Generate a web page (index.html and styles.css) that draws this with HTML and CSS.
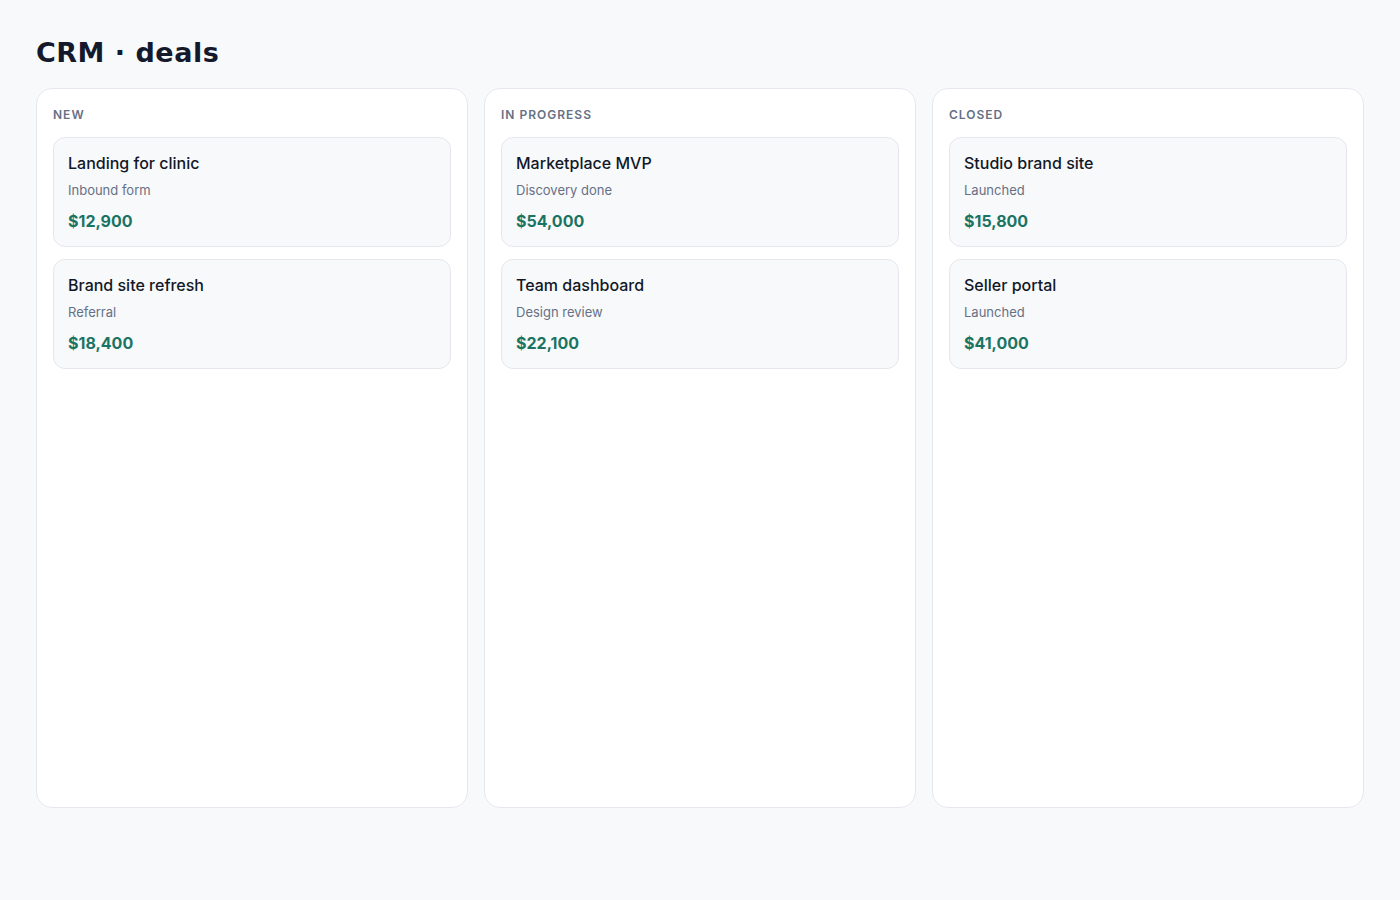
FILE: index.html
```html
<!DOCTYPE html>
<html lang="en">
<head>
    <meta charset="UTF-8">
    <meta name="viewport" content="width=device-width, initial-scale=1.0">
    <title>CRM - Deals</title>
    <link rel="stylesheet" href="styles.css">
</head>
<body>

    <div class="page">
        <h1 class="page-title">CRM · deals</h1>

        <div class="board">
            <div class="column">
                <div class="column-label">NEW</div>
                <div class="deal">
                    <div class="deal-name">Landing for clinic</div>
                    <div class="deal-note">Inbound form</div>
                    <div class="deal-amount">$12,900</div>
                </div>
                <div class="deal">
                    <div class="deal-name">Brand site refresh</div>
                    <div class="deal-note">Referral</div>
                    <div class="deal-amount">$18,400</div>
                </div>
            </div>

            <div class="column">
                <div class="column-label">IN PROGRESS</div>
                <div class="deal">
                    <div class="deal-name">Marketplace MVP</div>
                    <div class="deal-note">Discovery done</div>
                    <div class="deal-amount">$54,000</div>
                </div>
                <div class="deal">
                    <div class="deal-name">Team dashboard</div>
                    <div class="deal-note">Design review</div>
                    <div class="deal-amount">$22,100</div>
                </div>
            </div>

            <div class="column">
                <div class="column-label">CLOSED</div>
                <div class="deal">
                    <div class="deal-name">Studio brand site</div>
                    <div class="deal-note">Launched</div>
                    <div class="deal-amount">$15,800</div>
                </div>
                <div class="deal">
                    <div class="deal-name">Seller portal</div>
                    <div class="deal-note">Launched</div>
                    <div class="deal-amount">$41,000</div>
                </div>
            </div>
        </div>
    </div>

</body>
</html>
```

FILE: styles.css
```css
body {
    font-family: 'Inter', 'Noto Sans', sans-serif;
    margin: 0;
    padding: 0;
    background-color: #f8f9fb;
    color: #111827;
}

.page {
    padding: 37px 36px 0 36px;
}

.page-title {
    font-family: 'DejaVu Sans', sans-serif;
    font-size: 27px;
    font-weight: bold;
    letter-spacing: 0.5px;
    color: #141a2b;
    margin: 0 0 19px 0;
    line-height: 32px;
}

.board {
    display: grid;
    grid-template-columns: repeat(3, 1fr);
    gap: 16px;
}

.column {
    background-color: #fff;
    border: 1px solid #e6e8ee;
    border-radius: 16px;
    height: 720px;
    box-sizing: border-box;
    padding: 18px 16px 16px 16px;
    display: flex;
    flex-direction: column;
    gap: 12px;
}

.column-label {
    font-size: 12px;
    font-weight: 600;
    letter-spacing: 1px;
    color: #667085;
    line-height: 16px;
    margin-bottom: 2px;
}

.deal {
    background-color: #f8f9fb;
    border: 1px solid #e5e7ec;
    border-radius: 12px;
    padding: 14px;
    height: 110px;
    box-sizing: border-box;
}

.deal-name {
    font-size: 16px;
    font-weight: 500;
    color: #111827;
    line-height: 22px;
}

.deal-note {
    font-size: 13px;
    color: #667085;
    margin-top: 7px;
    line-height: 18px;
}

.deal-amount {
    font-size: 16px;
    font-weight: bold;
    color: #1b7463;
    margin-top: 10px;
    line-height: 24px;
}
```
